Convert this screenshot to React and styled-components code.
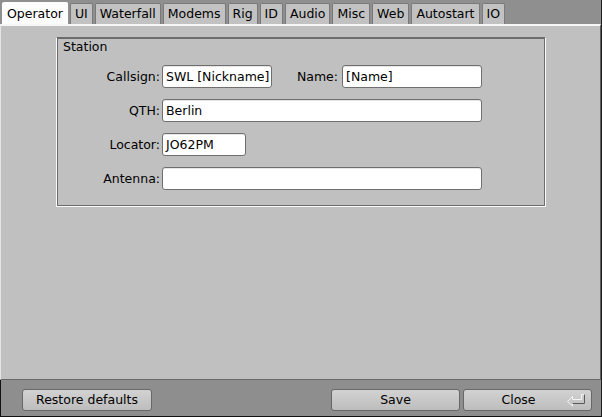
import React from "react";
import styled, { createGlobalStyle } from "styled-components";

const GlobalStyle = createGlobalStyle`
	html, body {
		margin: 0;
		padding: 0;
		background: #8f8f8f;
	}
	body {
		font-family: "DejaVu Sans", "Liberation Sans", sans-serif;
		font-size: 12.5px;
		color: #000;
	}
`;

const tabs = [
	"Operator",
	"UI",
	"Waterfall",
	"Modems",
	"Rig",
	"ID",
	"Audio",
	"Misc",
	"Web",
	"Autostart",
	"IO",
];

const Window = styled.div`
	width: 602px;
	height: 417px;
	box-sizing: border-box;
	display: flex;
	flex-direction: column;
	background: #8f8f8f;
	border-right: 1px solid #1e1e1e;
	border-bottom: 1px solid #111;
	overflow: hidden;
`;

const TabBar = styled.div`
	height: 24px;
	display: flex;
	align-items: flex-end;
	gap: 2px;
	padding-left: 2px;
	flex-shrink: 0;
`;

const Tab = styled.div`
	box-sizing: border-box;
	height: ${(props) => (props.active ? "22px" : "21px")};
	padding: 0 4px;
	display: flex;
	align-items: center;
	background: ${(props) => (props.active ? "#fcfcfc" : "#c2c2c2")};
	border: 1px solid ${(props) => (props.active ? "#fcfcfc" : "#7a7a7a")};
	border-bottom: none;
	border-radius: 2px 2px 0 0;
	white-space: nowrap;
	line-height: 16px;
`;

const Panel = styled.div`
	height: 356px;
	box-sizing: border-box;
	background: #c0c0c0;
	border-top: 2px solid #f6f6f6;
	border-left: 1px solid #e4e4e4;
	border-right: 1px solid #5e5e5e;
	border-bottom: 1px solid #6a6a6a;
	padding: 11px 0 0 55px;
	flex-shrink: 0;
`;

const Group = styled.div`
	width: 490px;
	height: 170px;
	box-sizing: border-box;
	border: 1px solid #fafafa;
	border-top-color: #6c6c6c;
	border-left-color: #fafafa;
	box-shadow: inset 1px 1px 0 #6c6c6c, inset -1px -1px 0 #6c6c6c;
	padding: 1px 0 0 2px;
`;

const GroupTitle = styled.div`
	height: 15px;
	line-height: 15px;
	padding-left: 4px;
	margin-bottom: 11px;
`;

const Form = styled.div`
	display: grid;
	grid-template-columns: 101px 320px;
	column-gap: 2px;
	row-gap: 11px;
	align-items: center;
`;

const Label = styled.label`
	text-align: right;
	white-space: nowrap;
`;

const InlineRow = styled.div`
	display: flex;
	align-items: center;
`;

const InlineLabel = styled(Label)`
	margin-left: auto;
	margin-right: 4px;
`;

const Field = styled.div`
	box-sizing: border-box;
	width: ${(props) => props.width}px;
	height: 23px;
	background: #fff;
	border: 1px solid #6f6f6f;
	border-radius: 3px;
	box-shadow: inset 0 1px 0 #e6e6e6;
	padding-left: 3px;
	line-height: 21px;
	white-space: nowrap;
	overflow: hidden;
`;

const BottomBar = styled.div`
	flex: 1;
	display: flex;
	align-items: flex-start;
	padding: 9px 9px 0 21px;
	border-left: 1px solid #111;
	background: #8e8e8e;
`;

const Button = styled.button`
	box-sizing: border-box;
	height: 22px;
	width: ${(props) => props.width}px;
	margin-left: ${(props) => props.offset || 0}px;
	padding: 0 ${(props) => (props.withIcon ? "18px" : "0")} 0 0;
	position: relative;
	font-family: inherit;
	font-size: 12.5px;
	color: #000;
	background: linear-gradient(#d2d2d2, #bdbdbd);
	border: 1px solid #686868;
	border-radius: 3px;
	line-height: 20px;
`;

const ReturnIcon = styled.svg`
	position: absolute;
	right: 5px;
	top: 3px;
`;

const Spacer = styled.div`
	flex: 1;
`;

export default function App() {
	return (
		<>
			<GlobalStyle />
			<Window>
				<TabBar>
					{tabs.map((t, i) => (
						<Tab key={t} active={i === 0}>
							{t}
						</Tab>
					))}
				</TabBar>
				<Panel>
					<Group>
						<GroupTitle>Station</GroupTitle>
						<Form>
							<Label>Callsign:</Label>
							<InlineRow>
								<Field width={110}>SWL [Nickname]</Field>
								<InlineLabel>Name:</InlineLabel>
								<Field width={140}>[Name]</Field>
							</InlineRow>
							<Label>QTH:</Label>
							<Field width={320}>Berlin</Field>
							<Label>Locator:</Label>
							<Field width={84}>JO62PM</Field>
							<Label>Antenna:</Label>
							<Field width={320}></Field>
						</Form>
					</Group>
				</Panel>
				<BottomBar>
					<Button width={130}>Restore defaults</Button>
					<Spacer />
					<Button width={129}>Save</Button>
					<Button width={129} offset={3} withIcon>
						Close
						<ReturnIcon width="20" height="14" viewBox="0 0 20 14">
							<path
								d="M1.5 8.5 L6.5 3.5 L6.5 6.5 L15.5 6.5 L15.5 1.5 L18.5 1.5 L18.5 10.5 L6.5 10.5 L6.5 13 Z"
								fill="none"
								stroke="#f4f4f4"
								strokeWidth="1"
							/>
							<path
								d="M6.5 10.5 L18.5 10.5 L18.5 1.5"
								fill="none"
								stroke="#5a5a5a"
								strokeWidth="1"
							/>
						</ReturnIcon>
					</Button>
				</BottomBar>
			</Window>
		</>
	);
}
